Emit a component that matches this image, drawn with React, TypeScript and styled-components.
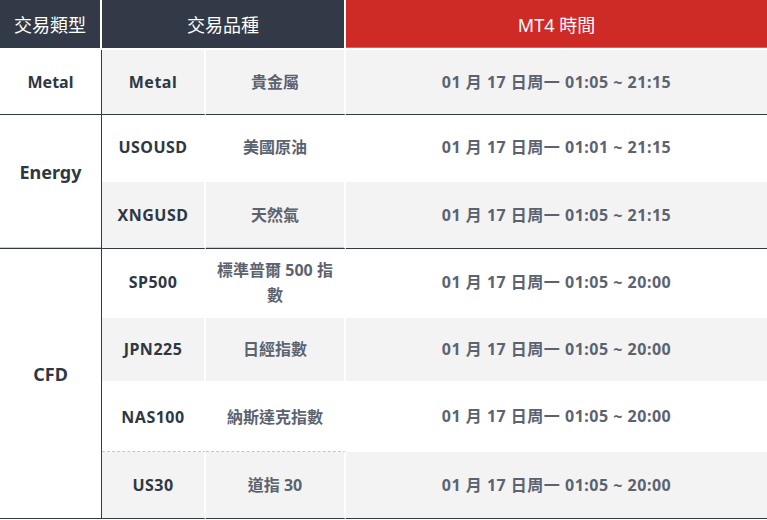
import React from "react";
import styled, { createGlobalStyle, css } from "styled-components";

const Global = createGlobalStyle`
  html, body { margin: 0; padding: 0; background: #ffffff; }
  body { font-family: "Noto Sans", "Noto Sans CJK TC", sans-serif; }
`;

const DARK = "#323a47";

const Table = styled.table`
  width: 767px;
  border-collapse: separate;
  border-spacing: 0;
  table-layout: fixed;
  font-family: "Noto Sans", "Noto Sans CJK TC", sans-serif;
`;

const HeadCell = styled.th<{ $tone: "dark" | "red"; $last?: boolean }>`
  height: 48px;
  padding: 0;
  font-size: 18px;
  font-weight: 400;
  color: #ffffff;
  text-align: center;
  vertical-align: middle;
  border-bottom: 2px solid #ffffff;
  border-right: ${(p) => (p.$last ? "none" : "2px solid #ffffff")};
  ${(p) =>
    p.$tone === "red"
      ? css`
          background: linear-gradient(to bottom, #ce2b27 calc(100% - 1px), #22a6ea 0);
        `
      : css`
          background: ${DARK};
        `}
`;

const Row = styled.tr<{ $h: number }>`
  height: ${(p) => p.$h}px;
`;

const CatCell = styled.td<{ $lift: number; $size: number; $accent?: boolean }>`
  padding: 0 0 ${(p) => p.$lift}px;
  background: #ffffff;
  border-right: 1px solid ${DARK};
  border-bottom: 1px solid ${DARK};
  font-size: ${(p) => p.$size}px;
  font-weight: 700;
  color: #2e3744;
  text-align: center;
  vertical-align: middle;
  ${(p) =>
    p.$accent &&
    css`
      box-shadow: inset 0 -1px 0 #b8d2ee;
    `}
`;

type Edge = "white" | "dark" | "dashed";

const Cell = styled.td<{
  $shade: boolean;
  $edge: Edge;
  $kind: "symbol" | "name" | "time";
  $accent?: boolean;
}>`
  padding: 0 8px;
  background: ${(p) => (p.$shade ? "#f3f3f3" : "#ffffff")};
  border-right: ${(p) => (p.$kind === "time" ? "none" : "2px solid #ffffff")};
  border-bottom: ${(p) =>
    p.$edge === "dark"
      ? `1px solid ${DARK}`
      : p.$edge === "dashed"
      ? "1px dashed #c4c4c4"
      : "2px solid #ffffff"};
  font-size: 16px;
  font-weight: 700;
  line-height: 25px;
  letter-spacing: ${(p) => (p.$kind === "name" ? "0" : "0.5px")};
  color: ${(p) => (p.$kind === "symbol" ? "#2e3744" : "#5c6370")};
  text-align: center;
  vertical-align: middle;
  ${(p) =>
    p.$accent &&
    css`
      box-shadow: inset 0 -1px 0 #b8d2ee;
    `}
`;

type Item = { symbol: string; name: string; time: string; h: number };
type Group = { type: string; lift: number; size: number; items: Item[] };

const groups: Group[] = [
  {
    type: "Metal",
    lift: 0,
    size: 16,
    items: [{ symbol: "Metal", name: "貴金屬", time: "01 月 17 日周一 01:05 ~ 21:15", h: 65 }],
  },
  {
    type: "Energy",
    lift: 20,
    size: 18,
    items: [
      { symbol: "USOUSD", name: "美國原油", time: "01 月 17 日周一 01:01 ~ 21:15", h: 67 },
      { symbol: "XNGUSD", name: "天然氣", time: "01 月 17 日周一 01:05 ~ 21:15", h: 67 },
    ],
  },
  {
    type: "CFD",
    lift: 20,
    size: 18,
    items: [
      { symbol: "SP500", name: "標準普爾 500 指數", time: "01 月 17 日周一 01:05 ~ 20:00", h: 69 },
      { symbol: "JPN225", name: "日經指數", time: "01 月 17 日周一 01:05 ~ 20:00", h: 65 },
      { symbol: "NAS100", name: "納斯達克指數", time: "01 月 17 日周一 01:05 ~ 20:00", h: 69 },
      { symbol: "US30", name: "道指 30", time: "01 月 17 日周一 01:05 ~ 20:00", h: 67 },
    ],
  },
];

export default function App() {
  let index = 0;
  return (
    <>
      <Global />
      <Table>
        <colgroup>
          <col style={{ width: 102 }} />
          <col style={{ width: 104 }} />
          <col style={{ width: 140 }} />
          <col style={{ width: 421 }} />
        </colgroup>
        <thead>
          <tr>
            <HeadCell $tone="dark">交易類型</HeadCell>
            <HeadCell $tone="dark" colSpan={2}>
              交易品種
            </HeadCell>
            <HeadCell $tone="red" $last>
              MT4 時間
            </HeadCell>
          </tr>
        </thead>
        <tbody>
          {groups.map((g) =>
            g.items.map((it, i) => {
              const shade = index % 2 === 0;
              index += 1;
              const lastInGroup = i === g.items.length - 1;
              const edge: Edge = lastInGroup ? "dark" : it.symbol === "NAS100" ? "dashed" : "white";
              const accent = g.type === "Energy" && lastInGroup;
              return (
                <Row key={it.symbol} $h={it.h}>
                  {i === 0 && (
                    <CatCell
                      rowSpan={g.items.length}
                      $lift={g.lift}
                      $size={g.size}
                      $accent={g.type === "Energy"}
                    >
                      {g.type}
                    </CatCell>
                  )}
                  <Cell $shade={shade} $edge={edge} $kind="symbol">
                    {it.symbol}
                  </Cell>
                  <Cell $shade={shade} $edge={edge} $kind="name" $accent={accent}>
                    {it.name}
                  </Cell>
                  <Cell
                    $shade={shade}
                    $edge={edge === "dashed" ? "white" : edge}
                    $kind="time"
                  >
                    {it.time}
                  </Cell>
                </Row>
              );
            })
          )}
        </tbody>
      </Table>
    </>
  );
}
